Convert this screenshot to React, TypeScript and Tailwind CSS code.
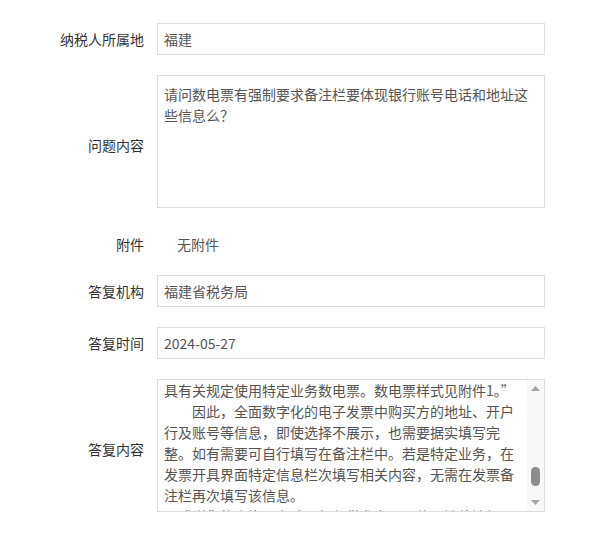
import React, { useLayoutEffect, useRef } from "react";

function Label({ children, extra = "" }: { children: React.ReactNode; extra?: string }) {
  return (
    <div className={`w-[144px] shrink-0 text-right text-[#333333] leading-[21px] ${extra}`}>{children}</div>
  );
}

function InputBox({ value }: { value: string }) {
  return (
    <div className="w-[388px] h-[32px] border border-[#dddddd] px-[6px] flex items-center text-[#555555]">
      {value}
    </div>
  );
}

const P1 =
  "\u3000\u3000根据《国家税务总局关于推广应用全面数字化电子发票的公告》规定：“数电票的票面样式根据不同业务进行差异化展示，从事特定业务的纳税人，应当按照其所";
const P2 = "具有关规定使用特定业务数电票。数电票样式见附件1。”";
const P3 =
  "\u3000\u3000因此，全面数字化的电子发票中购买方的地址、开户行及账号等信息，即使选择不展示，也需要据实填写完整。如有需要可自行填写在备注栏中。若是特定业务，在发票开具界面特定信息栏次填写相关内容，无需在发票备注栏再次填写该信息。";
const P4 = "\u3000感谢您的咨询！上述回复仅供参考，具体以法律法规及相关规定为准。";

function ReplyBox() {
  const scrollRef = useRef<HTMLDivElement>(null);
  const markerRef = useRef<HTMLParagraphElement>(null);
  useLayoutEffect(() => {
    if (scrollRef.current && markerRef.current) {
      scrollRef.current.scrollTop = markerRef.current.offsetTop;
    }
  });
  return (
    <div className="w-[388px] h-[133px] border border-[#dddddd] flex">
      <div
        ref={scrollRef}
        className="relative flex-1 overflow-hidden pt-[8px] px-[6px] text-[#555555] leading-[21px]"
      >
        <p>{"您好！您提交的问题已收悉，现答复如下："}</p>
        <p>{P1}</p>
        <p ref={markerRef}>{P2}</p>
        <p>{P3}</p>
        <p>{P4}</p>
      </div>
      <div className="w-[17px] shrink-0 bg-[#f8f8f8] flex flex-col items-center">
        <div className="h-[17px] w-full flex items-center justify-center">
          <svg width="9" height="5" viewBox="0 0 9 5">
            <polygon points="4.5,0 9,5 0,5" fill="#a3a3a3" />
          </svg>
        </div>
        <div className="flex-1 w-full flex flex-col items-center pt-[70px]">
          <div className="w-[9px] h-[19px] rounded-full bg-[#8c8c8c]" />
        </div>
        <div className="h-[17px] w-full flex items-center justify-center">
          <svg width="9" height="5" viewBox="0 0 9 5">
            <polygon points="0,0 9,0 4.5,5" fill="#a3a3a3" />
          </svg>
        </div>
      </div>
    </div>
  );
}

export default function App() {
  return (
    <div className="w-[607px] h-[544px] bg-white pt-[23px] text-[14px] font-['Noto_Sans_CJK_SC','Microsoft_YaHei',sans-serif]">
      <div className="flex items-center gap-[13px]">
        <Label>纳税人所属地</Label>
        <InputBox value="福建" />
      </div>

      <div className="flex gap-[13px] mt-[20px]">
        <Label extra="self-center pt-[7px]">问题内容</Label>
        <div className="w-[388px] h-[133px] border border-[#dddddd] pt-[8px] px-[6px] text-[#555555] leading-[21px]">
          请问数电票有强制要求备注栏要体现银行账号电话和地址这些信息么？
        </div>
      </div>

      <div className="flex gap-[13px] mt-[20px] h-[27px]">
        <Label extra="pt-[6px]">附件</Label>
        <div className="pt-[6px] pl-[20px] leading-[21px] text-[#555555]">无附件</div>
      </div>

      <div className="flex items-center gap-[13px] mt-[20px]">
        <Label>答复机构</Label>
        <InputBox value="福建省税务局" />
      </div>

      <div className="flex items-center gap-[13px] mt-[20px]">
        <Label>答复时间</Label>
        <InputBox value="2024-05-27" />
      </div>

      <div className="flex gap-[13px] mt-[20px]">
        <Label extra="self-center pt-[7px]">答复内容</Label>
        <ReplyBox />
      </div>
    </div>
  );
}
